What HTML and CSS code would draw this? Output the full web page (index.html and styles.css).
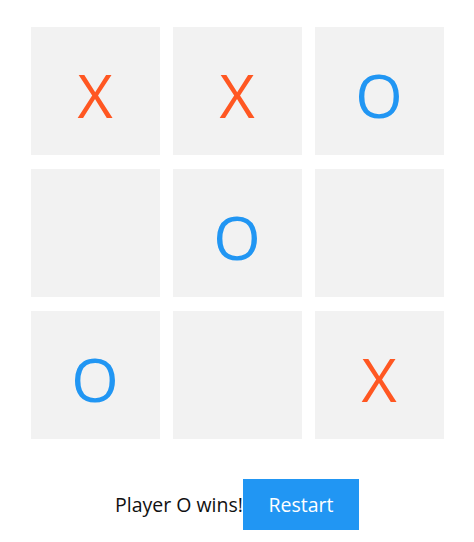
FILE: index.html
```html
<!DOCTYPE html>
<html lang="en">
<head>
    <meta charset="UTF-8">
    <meta name="viewport" content="width=device-width, initial-scale=1.0">
    <title>Tic Tac Toe</title>
    <link rel="stylesheet" href="styles.css">
</head>
<body>
    <div class="board">
        <div class="cell x">X</div>
        <div class="cell x">X</div>
        <div class="cell o">O</div>
        <div class="cell"></div>
        <div class="cell o">O</div>
        <div class="cell"></div>
        <div class="cell o">O</div>
        <div class="cell"></div>
        <div class="cell x">X</div>
    </div>

    <div class="status">
        <span class="message">Player O wins!</span><button class="restart-btn">Restart</button>
    </div>
</body>
</html>
```

FILE: styles.css
```css
:root {
    --x-color: #ff5722;
    --o-color: #2196f3;
    --cell-color: #f2f2f2;
    --text-color: #111;
}

* {
    margin: 0;
    padding: 0;
    box-sizing: border-box;
}

body {
    font-family: 'Open Sans', 'Noto Sans', sans-serif;
    color: var(--text-color);
    background-color: #fff;
}

.board {
    display: grid;
    grid-template-columns: repeat(3, 129px);
    grid-template-rows: repeat(3, 128px);
    column-gap: 13px;
    row-gap: 14px;
    width: 413px;
    margin: 27px auto 0;
}

.cell {
    background-color: var(--cell-color);
    display: flex;
    justify-content: center;
    align-items: center;
    font-size: 61px;
    padding-top: 6px;
}

.cell.x {
    color: var(--x-color);
}

.cell.o {
    color: var(--o-color);
}

.status {
    margin-top: 40px;
    text-align: center;
    font-size: 19.5px;
}

.restart-btn {
    width: 116px;
    height: 51px;
    border: none;
    background-color: var(--o-color);
    color: #fff;
    font-family: inherit;
    font-size: 19.5px;
    cursor: pointer;
}
```
